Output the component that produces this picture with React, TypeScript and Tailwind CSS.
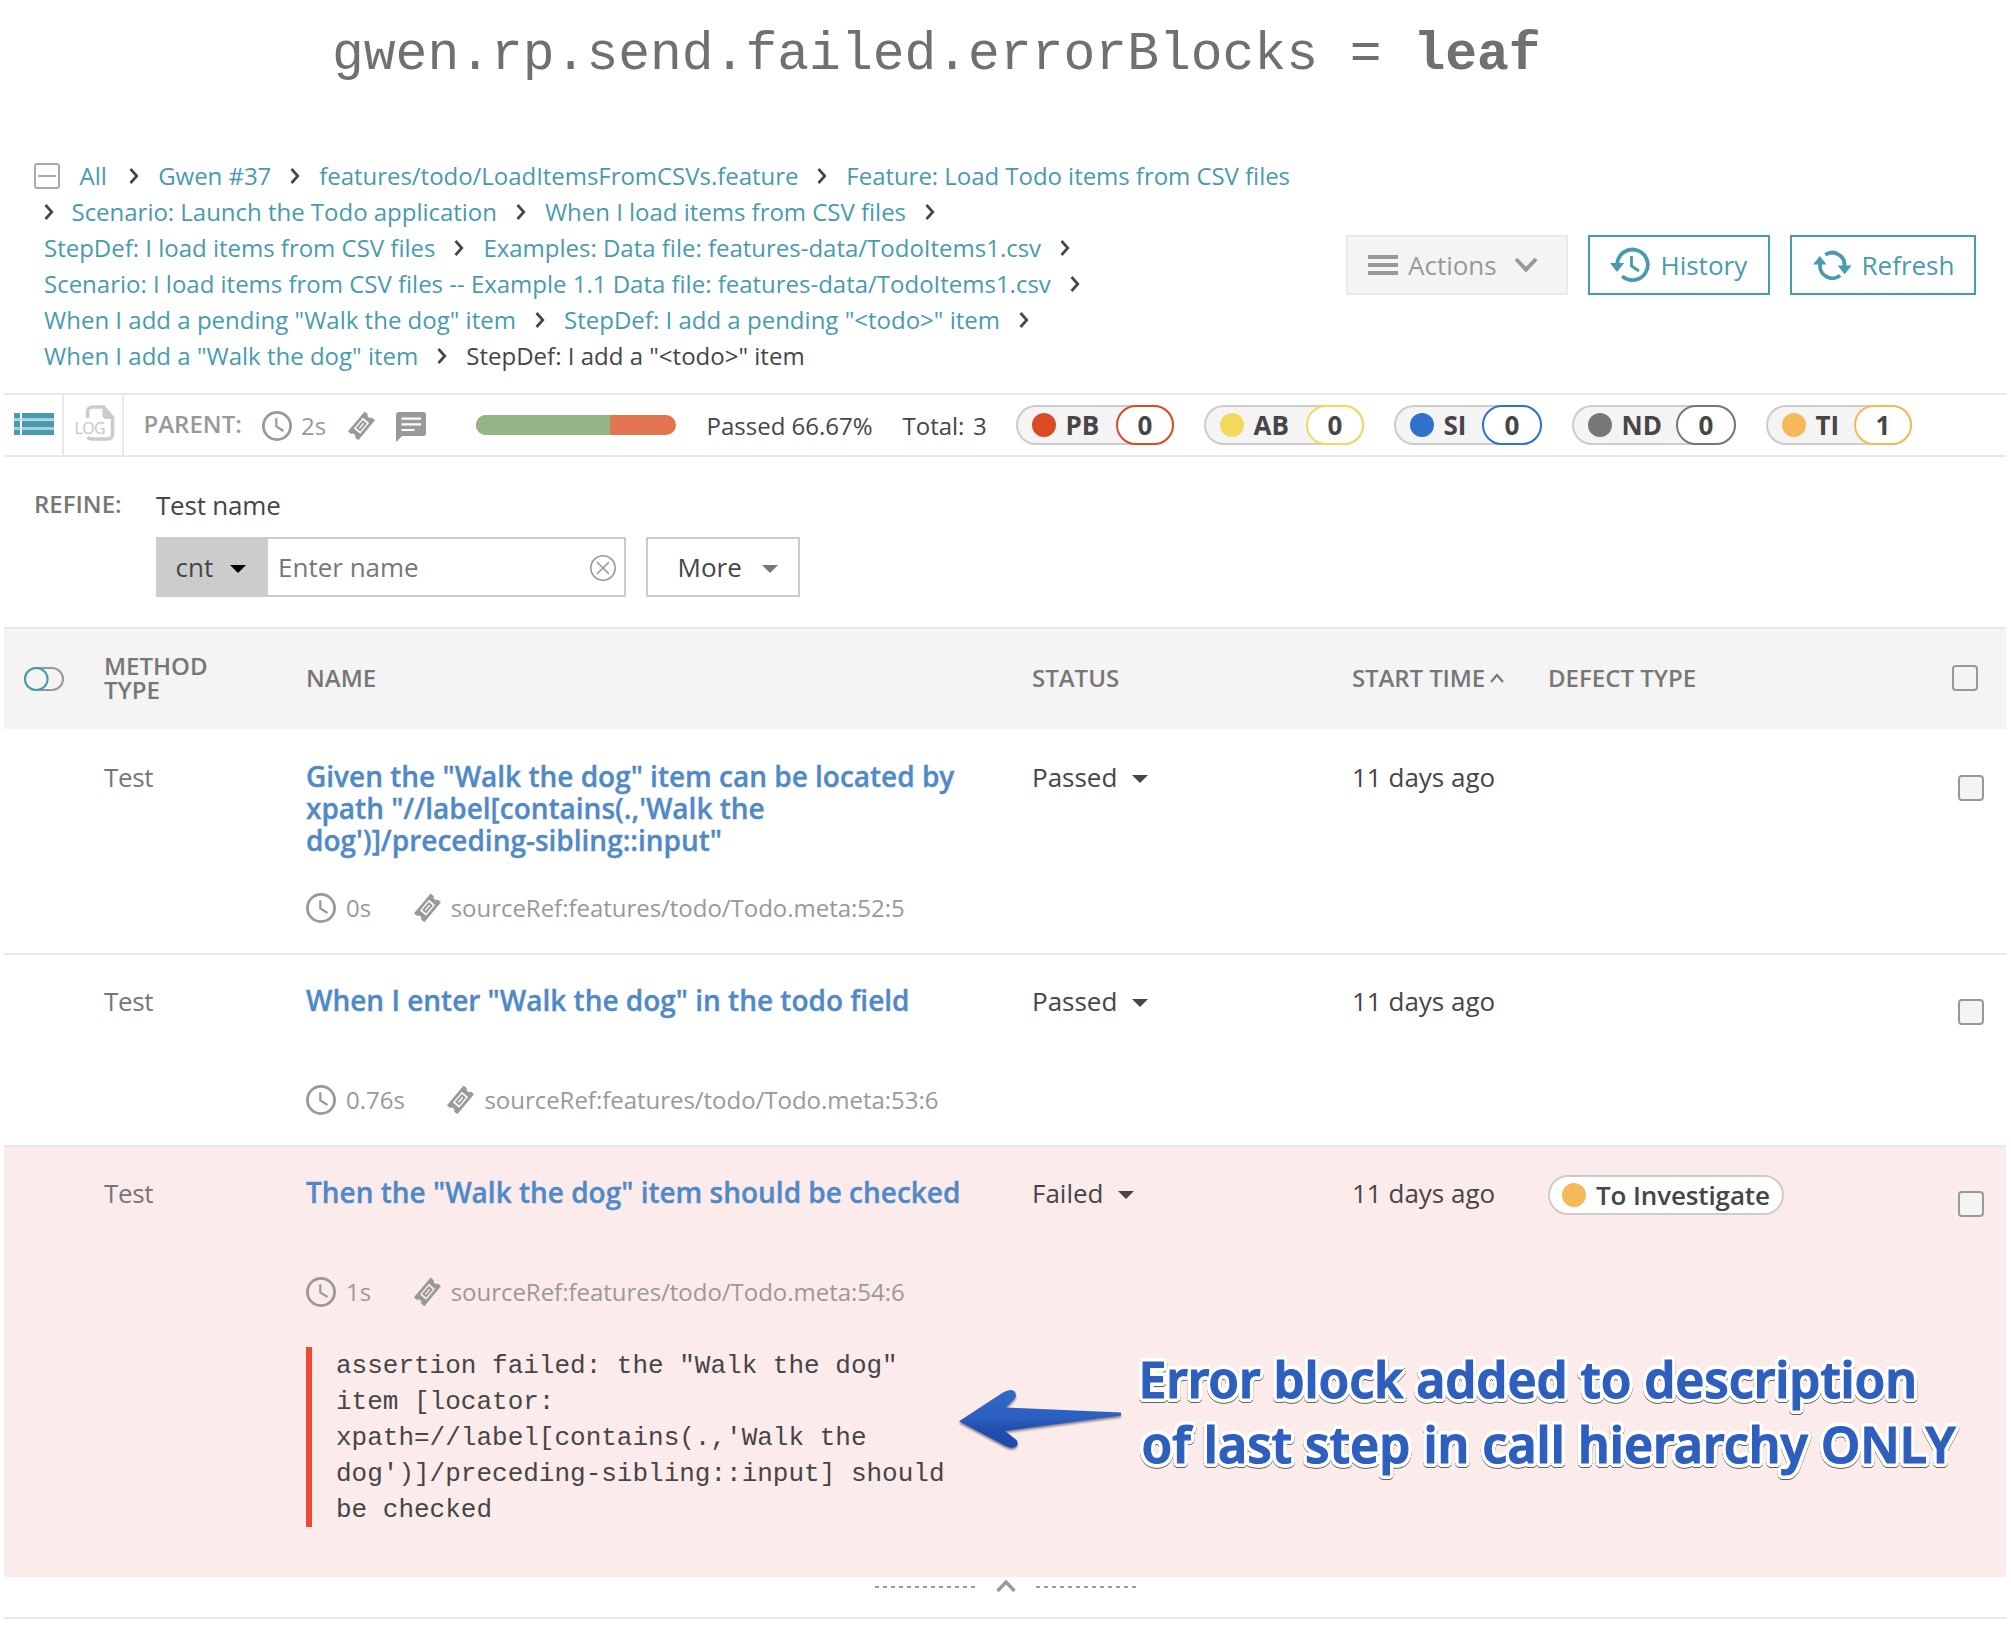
import React from "react";

type Crumb = { text: string; current?: boolean };

const crumbLines: { leading?: boolean; trailing?: boolean; tracking: string; items: Crumb[] }[] = [
  {
    leading: true,
    trailing: true,
    tracking: "tracking-[-0.02px]",
    items: [{ text: "Scenario: Launch the Todo application" }, { text: "When I load items from CSV files" }],
  },
  {
    trailing: true,
    tracking: "tracking-[-0.01px]",
    items: [
      { text: "StepDef: I load items from CSV files" },
      { text: "Examples: Data file: features-data/TodoItems1.csv" },
    ],
  },
  {
    trailing: true,
    tracking: "tracking-[-0.01px]",
    items: [
      { text: "Scenario: I load items from CSV files -- Example 1.1 Data file: features-data/TodoItems1.csv" },
    ],
  },
  {
    trailing: true,
    tracking: "tracking-[0.01px]",
    items: [{ text: 'When I add a pending "Walk the dog" item' }, { text: 'StepDef: I add a pending "<todo>" item' }],
  },
  {
    tracking: "tracking-[0.01px]",
    items: [{ text: 'When I add a "Walk the dog" item' }, { text: 'StepDef: I add a "<todo>" item', current: true }],
  },
];

const defects = [
  { label: "PB", count: 0, dot: "bg-[#da4a24]", border: "border-[#da4a24]", labelW: "w-[60px]", countW: "w-[58px]" },
  { label: "AB", count: 0, dot: "bg-[#f3d95c]", border: "border-[#f3d95c]", labelW: "w-[62px]", countW: "w-[58px]" },
  { label: "SI", count: 0, dot: "bg-[#2f71cb]", border: "border-[#2f71cb]", labelW: "w-[48px]", countW: "w-[60px]" },
  { label: "ND", count: 0, dot: "bg-[#777777]", border: "border-[#777777]", labelW: "w-[64px]", countW: "w-[60px]" },
  { label: "TI", count: 1, dot: "bg-[#f6b95a]", border: "border-[#f6b95a]", labelW: "w-[48px]", countW: "w-[58px]" },
];

const rows = [
  {
    title: ['Given the "Walk the dog" item can be located by', "xpath \"//label[contains(.,'Walk the", "dog')]/preceding-sibling::input\""],
    duration: "0s",
    source: "sourceRef:features/todo/Todo.meta:52:5",
    status: "Passed",
    height: "h-[224px]",
    tone: "border-white",
  },
  {
    title: ['When I enter "Walk the dog" in the todo field'],
    duration: "0.76s",
    source: "sourceRef:features/todo/Todo.meta:53:6",
    status: "Passed",
    height: "h-[192px]",
    tone: "border-[#e9e9e9]",
  },
  {
    title: ['Then the "Walk the dog" item should be checked'],
    duration: "1s",
    source: "sourceRef:features/todo/Todo.meta:54:6",
    status: "Failed",
    height: "h-[432px]",
    tone: "border-[#e9e9e9] bg-[#fbeceb]",
    defect: "To Investigate",
    error: [
      'assertion failed: the "Walk the dog"',
      "item [locator:",
      "xpath=//label[contains(.,'Walk the",
      "dog')]/preceding-sibling::input] should",
      "be checked",
    ],
  },
];

function CrumbChevron() {
  return (
    <svg className="shrink-0" width="10" height="16" viewBox="0 0 10 16" fill="none">
      <path d="M1.5 1L7.8 8L1.5 15" stroke="#464547" strokeWidth="2.7" />
    </svg>
  );
}

function CrumbLink({ text, current }: Crumb) {
  return <span className={current ? "text-[#464547]" : "text-[#489bae]"}>{text}</span>;
}

function Breadcrumbs() {
  return (
    <div className="flex flex-col pt-[50px] text-[24px] leading-[36px] whitespace-nowrap">
      <div className="flex h-9 items-center gap-[19px] pl-[34px] tracking-[-0.04px]">
        <span className="flex h-[26px] w-[26px] items-center justify-center rounded-[3px] border-2 border-[#a8a8a8] bg-white">
          <span className="h-[2px] w-[18px] bg-[#a8a8a8]" />
        </span>
        <span className="mr-[3.5px] ml-[0.5px]">
          <CrumbLink text="All" />
        </span>
        <CrumbChevron />
        <CrumbLink text="Gwen #37" />
        <CrumbChevron />
        <CrumbLink text="features/todo/LoadItemsFromCSVs.feature" />
        <CrumbChevron />
        <CrumbLink text="Feature: Load Todo items from CSV files" />
      </div>
      {crumbLines.map((line, i) => (
        <div key={i} className={"flex h-9 items-center gap-[19px] pl-[44px] " + line.tracking}>
          {line.leading && (
            <span className="-mr-[1.5px]">
              <CrumbChevron />
            </span>
          )}
          {line.items.map((c, j) => (
            <React.Fragment key={j}>
              {j > 0 && <CrumbChevron />}
              <CrumbLink {...c} />
            </React.Fragment>
          ))}
          {line.trailing && <CrumbChevron />}
        </div>
      ))}
    </div>
  );
}

function HeaderButtons() {
  return (
    <div className="mt-[127px] mr-[35px] flex h-[60px] gap-5 text-[26px]">
      <button className="flex w-[222px] items-center border-2 border-[#e9e9e9] bg-[#f4f4f4] pl-5 text-[#999999]">
        <svg width="30" height="20" viewBox="0 0 30 20" fill="#999999">
          <rect width="30" height="4" />
          <rect y="8" width="30" height="4" />
          <rect y="16" width="30" height="4" />
        </svg>
        <span className="ml-[10px] w-[106px] text-left">Actions</span>
        <svg width="24" height="16" viewBox="0 0 24 16" fill="none">
          <path d="M2 2L12 12.6L22 2" stroke="#999999" strokeWidth="4" />
        </svg>
      </button>
      <button className="flex w-[182px] items-center border-2 border-[#489bae] bg-white pl-[20px] text-[#489bae]">
        <svg width="40" height="36" viewBox="0 0 40 36" fill="none">
          <path d="M7.2 16.5A15.3 15.3 0 1 1 12.2 29.2" stroke="#489bae" strokeWidth="3.8" />
          <path d="M0 16H14.2L7.1 25Z" fill="#489bae" />
          <path d="M21.5 9V19L29 24" stroke="#489bae" strokeWidth="2.8" />
        </svg>
        <span className="ml-[10.5px]">History</span>
      </button>
      <button className="flex w-[186px] items-center border-2 border-[#489bae] bg-white pl-[21px] text-[#489bae]">
        <svg width="39" height="30" viewBox="0 0 39 30" fill="none">
          <path d="M12.3 4.8A12.3 12.3 0 0 1 31.4 16.5" stroke="#489bae" strokeWidth="3.8" />
          <path d="M27.2 25.4A12.3 12.3 0 0 1 7.3 13.5" stroke="#489bae" strokeWidth="3.8" />
          <path d="M0 14.6H13.6L6.8 6Z" fill="#489bae" />
          <path d="M24.6 15.6H38.6L31.6 24.2Z" fill="#489bae" />
        </svg>
        <span className="ml-[9.5px]">Refresh</span>
      </button>
    </div>
  );
}

function ClockIcon() {
  return (
    <svg className="shrink-0" width="30" height="30" viewBox="0 0 30 30" fill="none" stroke="#999999">
      <circle cx="15" cy="15" r="13.6" strokeWidth="2.8" />
      <path d="M14.3 7.2V15.4L21.5 20" strokeWidth="2.2" />
    </svg>
  );
}

function TicketIcon() {
  return (
    <svg className="shrink-0" width="27" height="30" viewBox="0 0 27 30" fill="none">
      <g transform="translate(13.5 14.8) rotate(-50)">
        <path
          fillRule="evenodd"
          fill="#999999"
          d="M-13 -6.8H13V-2.6A2.7 2.7 0 0 0 13 2.6V6.8H-13V2.6A2.7 2.7 0 0 0 -13 -2.6ZM-7 -4V4H7V-4Z"
        />
        <rect x="-4.3" y="-1.7" width="8.6" height="3.4" stroke="#999999" strokeWidth="2" />
      </g>
    </svg>
  );
}

function CommentIcon() {
  return (
    <svg className="shrink-0" width="30" height="30" viewBox="0 0 30 30">
      <path fill="#999999" d="M3 0H27A3 3 0 0 1 30 3V21A3 3 0 0 1 27 24H6L0 30V3A3 3 0 0 1 3 0Z" />
      <path fill="#ffffff" d="M5.5 5.5H25V7.7H5.5ZM5.5 11.2H25V13.4H5.5ZM5.5 16.9H18.5V19.1H5.5Z" />
    </svg>
  );
}

function LogIcon() {
  return (
    <span className="relative block h-9 w-10">
      <svg width="40" height="36" viewBox="0 0 40 36" fill="none">
        <path
          d="M12.5 13V6.5A4.5 4.5 0 0 1 17 2H28.5L37.5 12.5V29.5A4.5 4.5 0 0 1 33 34H17A4.5 4.5 0 0 1 12.6 32"
          stroke="#cccccc"
          strokeWidth="3.6"
        />
        <path d="M27.5 1V10.5A4 4 0 0 0 31 14H39Z" fill="#cccccc" />
      </svg>
      <span className="absolute top-[13px] left-0 text-[16px] leading-5 tracking-[-0.6px] text-[#c4c4c4]">LOG</span>
    </span>
  );
}

function Caret({ className }: { className: string }) {
  return (
    <svg className={"shrink-0 " + className} width="16" height="8" viewBox="0 0 16 8" fill="currentColor">
      <path d="M0 0H16L8 8Z" />
    </svg>
  );
}

function Toolbar() {
  return (
    <div className="mr-[5px] ml-1 flex h-16 items-stretch border-y-2 border-[#e9e9e9] text-[24px] whitespace-nowrap text-[#464547]">
      <div className="flex w-[60px] items-center border-r-2 border-[#e9e9e9] pb-[2px] pl-[10px]">
        <svg width="40" height="22" viewBox="0 0 40 22" fill="#489bae">
          <path d="M0 0H6V5.4H0ZM8 0H40V5.4H8ZM0 7.8H6V14.4H0ZM8 7.8H40V14.4H8ZM0 16.6H6V22H0ZM8 16.6H40V22H8Z" />
          <path fillOpacity="0.45" d="M0 6H40V7.2H0ZM0 14.9H40V16.1H0Z" />
        </svg>
      </div>
      <div className="flex w-[60px] items-center border-r-2 border-[#e9e9e9] pb-[4px] pl-[10.5px]">
        <LogIcon />
      </div>
      <div className="flex w-[118.5px] items-center pb-[3px] pl-[19.5px] font-semibold text-[#999999]">PARENT:</div>
      <div className="ml-[19.5px] flex w-[86px] items-center pt-[1px] text-[#999999]">
        <ClockIcon />
        <span className="ml-[9px]">2s</span>
      </div>
      <div className="flex w-12 items-center pt-[1px]">
        <TicketIcon />
      </div>
      <div className="flex w-20 items-center pt-[5px] pb-[1px]">
        <CommentIcon />
      </div>
      <div className="flex w-[230.5px] items-center">
        <div className="flex h-5 w-[200px] overflow-hidden rounded-full bg-[#e37452]">
          <div className="h-full w-[134px] bg-[#93b684]" />
        </div>
      </div>
      <div className="flex w-[196px] items-center pt-[1px]">Passed 66.67%</div>
      <div className="flex w-[113.5px] items-center pt-[1px]">
        <span className="w-[70.5px]">Total:</span>
        <span>3</span>
      </div>
      <div className="flex items-center gap-[30px]">
        {defects.map((d) => (
          <div
            key={d.label}
            className="flex h-10 items-center rounded-[20px] bg-[#f4f4f4] pl-4 text-[26px] font-bold shadow-[inset_0_0_0_2px_#cccccc]"
          >
            <span className={"h-6 w-6 rounded-full " + d.dot} />
            <span className={"pl-[9.5px] " + d.labelW}>{d.label}</span>
            <span
              className={"flex h-10 items-center justify-center rounded-[20px] border-2 bg-white " + d.countW + " " + d.border}
            >
              {d.count}
            </span>
          </div>
        ))}
      </div>
    </div>
  );
}

function Refine() {
  return (
    <div className="ml-1 flex h-[170px] text-[26px] leading-9 text-[#464547]">
      <div className="ml-[30px] w-[122px] pt-[29px] text-[24px] font-semibold text-[#777777]">REFINE:</div>
      <div className="pt-[30px]">
        <div className="tracking-[-0.2px]">Test name</div>
        <div className="mt-[14px] flex gap-5">
          <div className="flex h-[60px] w-[470px] border-2 border-[#cccccc] bg-white">
            <div className="flex w-[110px] items-center bg-[#cccccc] pl-[17.5px]">
              <span className="w-[54.5px]">cnt</span>
              <Caret className="mt-1 text-black" />
            </div>
            <div className="flex flex-1 items-center justify-between pr-2 pl-[10px]">
              <span className="text-[#777777]">Enter name</span>
              <svg className="mt-[2px]" width="26" height="26" viewBox="0 0 26 26" fill="none" stroke="#999999" strokeWidth="1.6">
                <circle cx="13" cy="13" r="12.2" />
                <path d="M7 7L19 19M19 7L7 19" />
              </svg>
            </div>
          </div>
          <button className="flex h-[60px] w-[154px] items-center border-2 border-[#cccccc] bg-white pl-[29.5px]">
            <span className="w-[84.5px] text-left">More</span>
            <Caret className="mt-1 text-[#777777]" />
          </button>
        </div>
      </div>
    </div>
  );
}

function Checkbox({ className }: { className: string }) {
  return <span className={"block h-[26px] w-[26px] rounded-[4px] border-2 border-[#999999] bg-[#f4f4f4] " + className} />;
}

function TableHeader() {
  return (
    <div className="grid h-[102px] grid-cols-[100px_202px_726px_320px_196px_1fr] items-center border-t-2 border-[#e9e9e9] bg-[#f4f4f4] text-[24px] leading-6 font-semibold text-[#777777]">
      <div className="pl-5">
        <svg width="40" height="24" viewBox="0 0 40 24" fill="none" strokeWidth="2">
          <rect x="1" y="1" width="38" height="22" rx="11" stroke="#999999" />
          <ellipse cx="12.3" cy="12" rx="11.3" ry="11" stroke="#489bae" fill="#f4f4f4" />
        </svg>
      </div>
      <div className="pb-[3px]">
        METHOD
        <br />
        TYPE
      </div>
      <div className="pb-[3px]">NAME</div>
      <div className="pb-[3px]">STATUS</div>
      <div className="flex items-center pb-[3px] tracking-[-0.1px]">
        START TIME
        <svg className="ml-[5px]" width="14" height="10" viewBox="0 0 14 10" fill="none">
          <path d="M1 9L7 2L13 9" stroke="#777777" strokeWidth="2.2" />
        </svg>
      </div>
      <div className="flex items-center justify-between pr-7 pb-[3px] whitespace-nowrap">
        DEFECT TYPE
        <Checkbox className="mt-[1px]" />
      </div>
    </div>
  );
}

function TableRows() {
  return (
    <>
      {rows.map((r, i) => (
        <div
          key={i}
          className={
            "grid grid-cols-[100px_202px_726px_320px_196px_1fr] border-t-2 text-[26px] leading-8 whitespace-nowrap text-[#464547] " +
            r.height +
            " " +
            r.tone
          }
        >
          <div />
          <div className="pt-[30px] tracking-[-0.35px] text-[#777777]">Test</div>
          <div className="pt-[29px]">
            <div className="min-h-16 text-[28px] leading-8 font-semibold tracking-[-0.01px] text-[#5089c8] [-webkit-text-stroke:0.35px_#5089c8]">
              {r.title.map((t) => (
                <div key={t}>{t}</div>
              ))}
            </div>
            <div className="mt-[37px] flex h-[30px] items-center text-[24px] text-[#999999]">
              <ClockIcon />
              <span className="ml-[10px]">{r.duration}</span>
              <span className="ml-[42.5px]">
                <TicketIcon />
              </span>
              <span className="ml-[10px] tracking-[-0.03px]">{r.source}</span>
            </div>
            {r.error && (
              <div className="mt-10 h-[180px] border-l-6 border-[#ed4a36] pt-[1px] pl-[24px] font-['Liberation_Mono',monospace] leading-9">
                {r.error.map((t) => (
                  <div key={t}>{t}</div>
                ))}
              </div>
            )}
          </div>
          <div className="flex items-start pt-[30px]">
            {r.status}
            <Caret className="mt-[14px] ml-[14.5px]" />
          </div>
          <div className="pt-[30px]">11 days ago</div>
          <div className="flex items-start justify-between pr-[22px]">
            <div className="w-[236px]">
              {r.defect && (
                <div className="mt-7 flex h-10 w-[236px] items-center rounded-[20px] border-2 border-[#cccccc] bg-white pl-3 font-semibold tracking-[-0.12px]">
                  <span className="mr-[10px] h-6 w-6 rounded-full bg-[#f6b95a]" />
                  {r.defect}
                </div>
              )}
            </div>
            <Checkbox className="mt-11" />
          </div>
        </div>
      ))}
    </>
  );
}

function Annotation() {
  return (
    <>
      <svg
        className="absolute top-[1380px] left-[950px] drop-shadow-[0_2px_1px_rgba(40,40,60,0.55)]"
        width="180"
        height="76"
        viewBox="950 1380 180 76"
      >
        <defs>
          <linearGradient id="arrowFill" x1="0" y1="0" x2="0" y2="1">
            <stop offset="0" stopColor="#3269c9" />
            <stop offset="0.5" stopColor="#2c5fbf" />
            <stop offset="0.68" stopColor="#1f4eae" />
            <stop offset="1" stopColor="#1f4cab" />
          </linearGradient>
        </defs>
        <path
          fill="url(#arrowFill)"
          d="M959 1421.3L1003 1392.5Q1010 1388.3 1014 1391Q1018 1395 1014 1399.5L1006 1407.6L1121 1412.6V1415.4L1005 1431L1016.5 1440Q1019 1444 1016 1446.5Q1012 1449 1006 1446.2Z"
        />
      </svg>
      <div className="absolute top-[1347px] left-[1138.5px] font-['Noto_Sans','Open_Sans',sans-serif] text-[49.8px] leading-[65px] font-semibold whitespace-nowrap text-[#2e5fbe] drop-shadow-[0_1.5px_0.6px_rgba(50,50,50,0.75)] [-webkit-text-stroke:1.2px_#2e5fbe] [text-shadow:4px_0_#fff,3.7px_1.5px_#fff,2.8px_2.8px_#fff,1.5px_3.7px_#fff,0_4px_#fff,-1.5px_3.7px_#fff,-2.8px_2.8px_#fff,-3.7px_1.5px_#fff,-4px_0_#fff,-3.7px_-1.5px_#fff,-2.8px_-2.8px_#fff,-1.5px_-3.7px_#fff,0_-4px_#fff,1.5px_-3.7px_#fff,2.8px_-2.8px_#fff,3.7px_-1.5px_#fff,2px_0_#fff,-2px_0_#fff,0_2px_#fff,0_-2px_#fff]">
        <div className="tracking-[-0.07px]">Error block added to description</div>
        <div className="pl-[3px] tracking-[0.06px]">of last step in call hierarchy ONLY</div>
      </div>
    </>
  );
}

function CollapseFooter() {
  const dashes = "h-[2px] w-[101px] bg-[repeating-linear-gradient(to_right,#999999_0_4px,transparent_4px_8px)]";
  return (
    <div className="flex h-[42px] justify-center border-b-2 border-[#e9e9e9] pt-[2px] pl-[2px]">
      <div className="flex h-4 items-center gap-5">
        <span className={dashes} />
        <svg className="-mt-[3px]" width="20" height="14" viewBox="0 0 20 14" fill="none">
          <path d="M1.5 12L10 3L18.5 12" stroke="#999999" strokeWidth="3.4" />
        </svg>
        <span className={dashes} />
      </div>
    </div>
  );
}

export default function App() {
  return (
    <div className="relative h-[1639px] w-[2011px] overflow-hidden bg-white font-['Open_Sans',sans-serif]">
      <h1 className="h-[108px] pl-[332px] font-['Liberation_Mono',monospace] text-[53px] leading-[110px] whitespace-pre text-[#707070]">
        gwen.rp.send.failed.errorBlocks = <b>leaf</b>
      </h1>
      <div className="flex h-[285px] items-start justify-between">
        <Breadcrumbs />
        <HeaderButtons />
      </div>
      <Toolbar />
      <Refine />
      <div className="mr-[5px] ml-1">
        <TableHeader />
        <TableRows />
        <CollapseFooter />
      </div>
      <Annotation />
    </div>
  );
}
